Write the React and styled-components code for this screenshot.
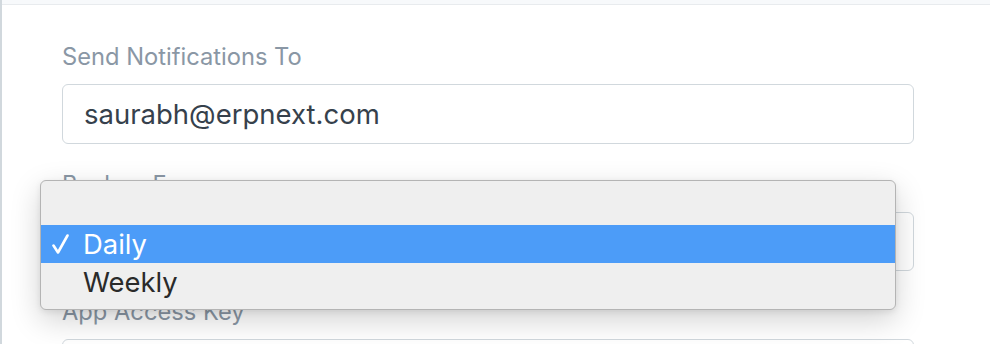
import React from 'react'
import styled, { createGlobalStyle } from 'styled-components'

const Global = createGlobalStyle`
  html, body {
    margin: 0;
    padding: 0;
    background: #fff;
    font-family: Inter, "Open Sans", "Liberation Sans", sans-serif;
  }
`

const Page = styled.div`
  width: 990px;
  height: 344px;
  overflow: hidden;
  box-sizing: border-box;
  border-left: 2px solid #d1d8dd;
  background: #fff;
`

const TopStrip = styled.div`
  height: 4px;
  background: #f7f9fb;
  border-bottom: 1px solid #e8ebee;
`

const Form = styled.div`
  width: 852px;
  padding: 40px 0 0 60px;
  display: flex;
  flex-direction: column;
  gap: 29px;
`

const Group = styled.div`
  display: flex;
  flex-direction: column;
  gap: 15px;
`

const Label = styled.div`
  font-size: 23.7px;
  line-height: 24px;
  color: #8a97a5;
`

const Field = styled.div`
  position: relative;
  box-sizing: border-box;
  height: ${p => p.$h || 60}px;
  border: 1.5px solid #d1d8dd;
  border-radius: 6px;
  background: #fff;
  padding: 0 21px;
  display: flex;
  align-items: center;
  font-size: 27.5px;
  color: #36414c;
`

const Menu = styled.div`
  position: absolute;
  left: -23px;
  top: -33px;
  width: 856px;
  box-sizing: border-box;
  padding: 6px 0 8px;
  background: #efefef;
  border: 1px solid #b4b4b4;
  border-radius: 6px;
  box-shadow: 0 10px 30px rgba(0, 0, 0, 0.18), 0 2px 6px rgba(0, 0, 0, 0.08);
  z-index: 5;
`

const Option = styled.div`
  height: 38px;
  display: flex;
  align-items: center;
  padding-left: 42px;
  position: relative;
  font-size: 27.4px;
  color: ${p => (p.$active ? '#fff' : '#2a2a2a')};
  background: ${p => (p.$active ? '#4c9cf8' : 'transparent')};
`

const Check = styled.svg`
  position: absolute;
  left: 11px;
  top: 9px;
`

export default function App() {
  return (
    <Page>
      <Global />
      <TopStrip />
      <Form>
        <Group>
          <Label>Send Notifications To</Label>
          <Field>saurabh@erpnext.com</Field>
        </Group>
        <Group>
          <Label>Backup Frequency</Label>
          <Field $h={59}>
            <Menu>
              <Option />
              <Option $active>
                <Check width="17" height="20" viewBox="0 0 17 20">
                  <path d="M1.5 11.5 L6 18.5 L15.5 1.5" fill="none" stroke="#fff" strokeWidth="2.6" strokeLinecap="round" strokeLinejoin="round" />
                </Check>
                Daily
              </Option>
              <Option>Weekly</Option>
            </Menu>
          </Field>
        </Group>
        <Group>
          <Label>App Access Key</Label>
          <Field />
        </Group>
      </Form>
    </Page>
  )
}
